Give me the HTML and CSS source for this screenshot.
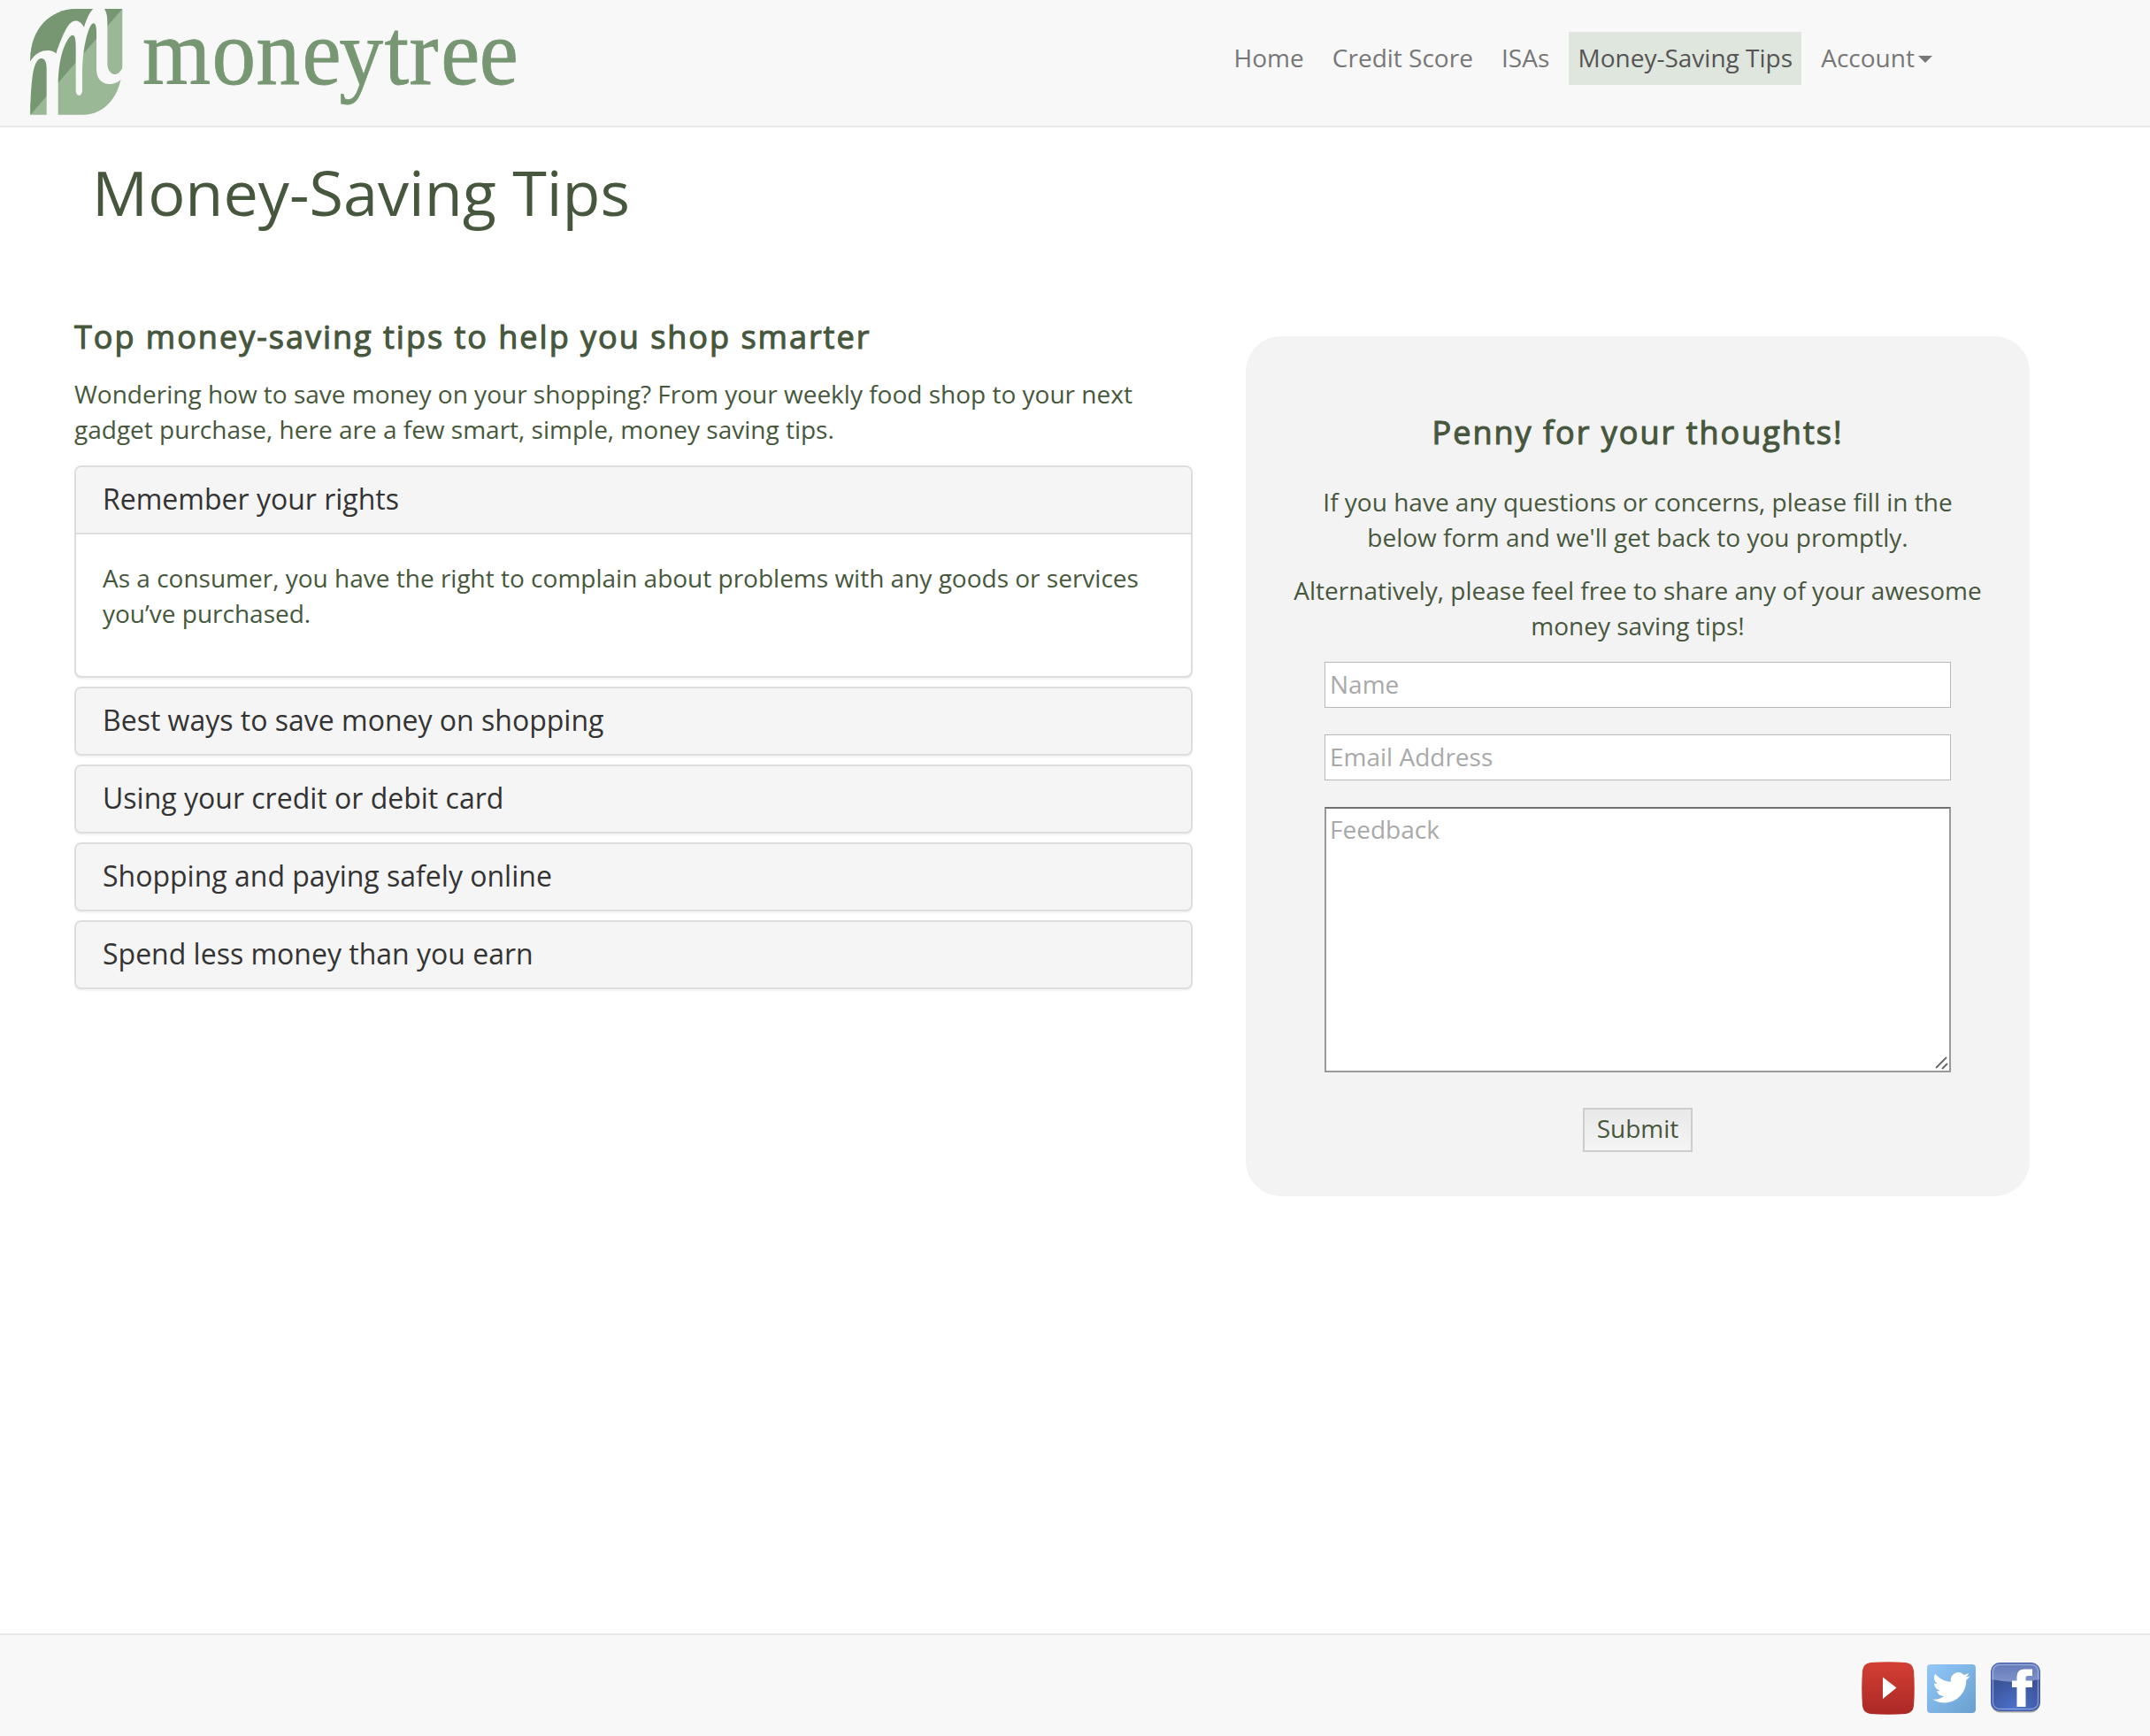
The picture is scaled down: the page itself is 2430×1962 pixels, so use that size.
FILE: index.html
```html
<!DOCTYPE html>
<html lang="en">
<head>
<meta charset="utf-8">
<title>Money-Saving Tips</title>
<link rel="stylesheet" href="styles.css">
</head>
<body>
<header class="navbar">
  <svg class="logo" width="600" height="142" viewBox="0 0 600 142" role="img" aria-label="moneytree">
    <g transform="translate(20 0) scale(.33333)">
      <path fill="#9ab896" d="M43 389V200C43 100 110 30 200 30H355V215C355 330 290 389 222 389Z"/>
      <path fill="#779773" d="M43 389V200C43 100 110 30 200 30H355Z"/>
      <path fill="#f8f8f8" d="M41 211C60 177 85 170 105 171C118 172 125 176 130 182C140 150 160 100 175 82C190 65 210 65 225 92C235 60 245 40 256 30L260 27H292C300 38 304 50 304 75V215C304 240 318 252 330 252C342 252 351 240 357 226V264L347 272C335 283 318 285 308 285C280 283 267 262 267 235V110C267 90 264 79 257 79C248 79 238 105 230 140C224 165 220 200 219 240V305C219 329 197 329 197 305V160C197 140 196 119 186 119C178 119 163 140 152 175C143 205 138 240 137 283V391H98V235C98 210 92 198 80 198C67 198 55 220 50 260C46 290 44 330 43 350H41Z"/>
    </g>
    <text class="logo-word" transform="translate(161 95) scale(.945 1)" x="0 83 136 191 235.500 289.500 319 357 403" y="0">moneytree</text>
  </svg>
  <nav class="nav">
    <a class="nav-link">Home</a>
    <a class="nav-link">Credit Score</a>
    <a class="nav-link">ISAs</a>
    <a class="nav-link active">Money-Saving Tips</a>
    <a class="nav-link">Account<span class="caret"></span></a>
  </nav>
</header>
<main class="main">
  <h1 class="title">Money-Saving Tips</h1>
  <div class="columns">
    <section class="tips">
      <h3 class="subtitle">Top money-saving tips to help you shop smarter</h3>
      <p class="intro">Wondering how to save money on your shopping? From your weekly food shop to your next gadget purchase, here are a few smart, simple, money saving tips.</p>
      <div class="accordion">
        <article class="panel">
          <h4 class="panel-title">Remember your rights</h4>
          <div class="panel-body"><p>As a consumer, you have the right to complain about problems with any goods or services you’ve purchased.</p></div>
        </article>
        <article class="panel"><h4 class="panel-title">Best ways to save money on shopping</h4></article>
        <article class="panel"><h4 class="panel-title">Using your credit or debit card</h4></article>
        <article class="panel"><h4 class="panel-title">Shopping and paying safely online</h4></article>
        <article class="panel"><h4 class="panel-title">Spend less money than you earn</h4></article>
      </div>
    </section>
    <form class="feedback">
      <h3 class="subtitle">Penny for your thoughts!</h3>
      <p>If you have any questions or concerns, please fill in the below form and we'll get back to you promptly.</p>
      <p>Alternatively, please feel free to share any of your awesome money saving tips!</p>
      <input class="field" type="text" placeholder="Name">
      <input class="field" type="text" placeholder="Email Address">
      <div class="area">
        <textarea class="field field-area" placeholder="Feedback"></textarea>
        <svg class="grip" width="16" height="16" viewBox="0 0 16 16"><path d="M2 14L14 2M9 15L15 9" stroke="#666" stroke-width="1.8" fill="none"/></svg>
      </div>
      <button class="submit" type="button">Submit</button>
    </form>
  </div>
</main>
<footer class="footer">
  <svg width="60" height="60" viewBox="0 0 60 60" role="img" aria-label="YouTube">
    <defs><linearGradient id="yt" x1="0" y1="0" x2="0" y2="1"><stop offset="0" stop-color="#d33f34"/><stop offset="1" stop-color="#ab2926"/></linearGradient></defs>
    <path fill="url(#yt)" d="M10 1Q30-.5 50 1Q58 2 59 10Q60.500 30 59 50Q58 58 50 59Q30 60.500 10 59Q2 58 1 50Q-.5 30 1 10Q2 2 10 1Z"/>
    <path fill="#fff" d="M24 17.500L39.500 29.500L24 42Z"/>
  </svg>
  <svg class="twitter" width="55" height="55" viewBox="0 0 55 55" role="img" aria-label="Twitter">
    <defs><linearGradient id="tw" x1="0" y1="0" x2="1" y2="1"><stop offset="0" stop-color="#93c9f8"/><stop offset="1" stop-color="#689fcf"/></linearGradient></defs>
    <rect width="55" height="55" rx="4" fill="url(#tw)"/>
    <path fill="#fff" transform="translate(6.300 5.200) scale(1.76)" d="M23.953 4.570a10 10 0 0 1-2.825.775 4.958 4.958 0 0 0 2.163-2.723c-.951.555-2.005.959-3.127 1.184a4.920 4.920 0 0 0-8.384 4.482C7.690 8.095 4.067 6.130 1.640 3.162a4.822 4.822 0 0 0-.666 2.475c0 1.710.87 3.213 2.188 4.096a4.904 4.904 0 0 1-2.228-.616v.06a4.923 4.923 0 0 0 3.946 4.827 4.996 4.996 0 0 1-2.212.085 4.936 4.936 0 0 0 4.604 3.417 9.867 9.867 0 0 1-6.102 2.105c-.39 0-.779-.023-1.170-.067a13.995 13.995 0 0 0 7.557 2.209c9.053 0 13.998-7.496 13.998-13.985 0-.21 0-.42-.015-.63A9.935 9.935 0 0 0 24 4.590z"/>
  </svg>
  <svg width="58" height="60" viewBox="0 0 58 60" role="img" aria-label="Facebook">
    <defs>
      <radialGradient id="fb" cx=".5" cy="1" r=".75"><stop offset="0" stop-color="#4d72cf"/><stop offset="1" stop-color="#3a5295"/></radialGradient>
      <linearGradient id="fg" x1="0" y1="0" x2="0" y2="1"><stop offset="0" stop-color="#6479b8"/><stop offset="1" stop-color="#7f93c9"/></linearGradient>
    </defs>
    <rect x="1.500" y="3" width="55" height="54.500" rx="10" fill="#a5a5a8"/>
    <rect x="1" y="1" width="56" height="55" rx="10" fill="#4460a6"/>
    <rect x="2" y="2" width="54" height="53" rx="9" fill="url(#fb)"/>
    <path fill="url(#fg)" d="M11 2H47Q56 2 56 11V20Q30 26 2 20V11Q2 2 11 2Z"/>
    <rect x="3.500" y="3.500" width="51" height="50" rx="7.500" fill="none" stroke="#a9bae6" stroke-width="1.400" opacity=".65"/>
    <path fill="#fff" d="M30.500 51V29H25V21.500H30.500V17Q30.500 8.500 39 8.500H48V16H43Q40.500 16 40.500 19V21.500H48V29H40.500V51Z"/>
  </svg>
</footer>
</body>
</html>
```
FILE: styles.css
```css
* { box-sizing: border-box; }

body {
  margin: 0;
  min-height: 1962px;
  display: flex;
  flex-direction: column;
  background: #fff;
  color: #47573d;
  font: 28px/40px "Open Sans", sans-serif;
}

h1, h3, h4, p { margin: 0; }

.navbar {
  display: flex;
  justify-content: space-between;
  height: 144px;
  padding-right: 236px;
  background: #f8f8f8;
  border-bottom: 2px solid #e7e7e7;
}

.logo { display: block; }

.logo-word {
  font: 105px "Liberation Serif", serif;
  fill: #779773;
  stroke: #779773;
  stroke-width: .8;
}

.nav {
  display: flex;
  align-items: flex-start;
  gap: 12px;
  padding-top: 36px;
}

.nav-link {
  display: flex;
  align-items: center;
  height: 60px;
  padding: 0 10.1px 2px;
  color: #777;
}

.nav-link.active {
  background: #dfe6dd;
  color: #555;
}

.caret {
  margin: 4px 0 0 4px;
  border: solid transparent;
  border-width: 8px 8px 0;
  border-top-color: #777;
}

.main {
  flex: 1;
  padding: 33px 136px 0 84px;
}

.title {
  margin-left: 20px;
  font-size: 70.200px;
  font-weight: 400;
  line-height: 80px;
}

.columns {
  display: flex;
  align-items: flex-start;
  gap: 60px;
  padding-top: 103px;
}

.subtitle {
  padding-top: 1px;
  font-size: 36px;
  font-weight: 400;
  line-height: 40px;
  letter-spacing: 2px;
  -webkit-text-stroke: 1.1px currentColor;
}

.tips { width: 1264px; }

.intro { margin: 24px 0 21px; }

.accordion {
  display: flex;
  flex-direction: column;
  gap: 10px;
}

.panel {
  background: #fff;
  border: 2px solid #ddd;
  border-radius: 8px;
  box-shadow: 0 2px 2px rgba(0, 0, 0, .05);
  overflow: hidden;
}

.panel-title {
  height: 74px;
  padding: 0 30px;
  background: #f5f5f5;
  color: #333;
  font-size: 32px;
  font-weight: 400;
  line-height: 71px;
}

.panel-body {
  padding: 29px 30px 51px;
  border-top: 2px solid #ddd;
}

.feedback {
  display: flex;
  flex-direction: column;
  align-items: center;
  width: 886px;
  height: 972px;
  margin-top: 20px;
  padding: 88px 50px 0;
  background: #f3f3f3;
  border-radius: 40px;
  text-align: center;
}

.feedback .subtitle { margin-bottom: 38px; }

.feedback p { margin-bottom: 20px; }

.field {
  display: block;
  width: 708px;
  height: 52px;
  margin: 0 0 30px;
  padding: 0 5px 2px;
  border: 1px solid #b9b9b9;
  background: #fff;
  color: inherit;
  font: inherit;
  outline: none;
}

.field::placeholder { color: #a9a9a9; opacity: 1; }

.feedback p + .field { margin-top: 1px; }

.area {
  position: relative;
  margin-bottom: 40px;
}

.field-area {
  height: 300px;
  margin: 0;
  padding: 3px 4px;
  border: 2px solid #999;
  border-top-color: #707070;
  resize: none;
}

.grip {
  position: absolute;
  right: 3px;
  bottom: 3px;
}

.submit {
  width: 124px;
  height: 50px;
  padding: 0 0 4px;
  border: 2px solid #cdcdcd;
  background: linear-gradient(#e9e9e9, #f4f4f4);
  color: inherit;
  font: inherit;
  line-height: 42px;
}

.footer {
  display: flex;
  align-items: flex-start;
  justify-content: flex-end;
  gap: 15px;
  height: 116px;
  padding: 30px 123px 0 0;
  background: #f8f8f8;
  border-top: 2px solid #e7e7e7;
}

.twitter { margin: 3px 1px 0 -1px; }
```
